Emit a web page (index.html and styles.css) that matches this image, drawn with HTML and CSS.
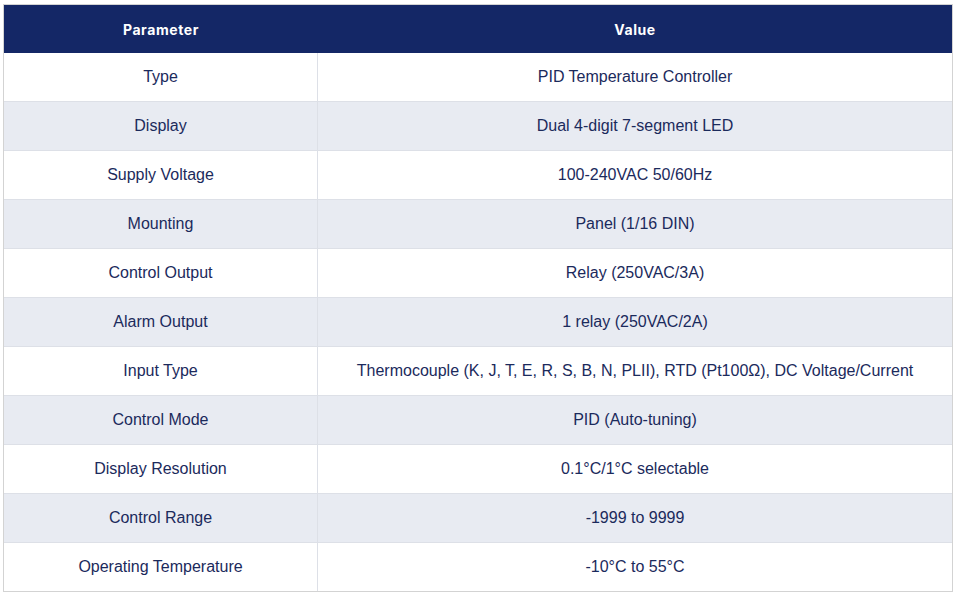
FILE: index.html
```html
<!DOCTYPE html>
<html>
<head>
<meta charset="utf-8">
<link rel="stylesheet" href="styles.css">
</head>
<body>
<table class="spec">
  <thead>
    <tr><th class="col-param">Parameter</th><th class="col-value">Value</th></tr>
  </thead>
  <tbody>
    <tr><td>Type</td><td>PID Temperature Controller</td></tr>
    <tr><td>Display</td><td>Dual 4-digit 7-segment LED</td></tr>
    <tr><td>Supply Voltage</td><td>100-240VAC 50/60Hz</td></tr>
    <tr><td>Mounting</td><td>Panel (1/16 DIN)</td></tr>
    <tr><td>Control Output</td><td>Relay (250VAC/3A)</td></tr>
    <tr><td>Alarm Output</td><td>1 relay (250VAC/2A)</td></tr>
    <tr><td>Input Type</td><td>Thermocouple (K, J, T, E, R, S, B, N, PLII), RTD (Pt100Ω), DC Voltage/Current</td></tr>
    <tr><td>Control Mode</td><td>PID (Auto-tuning)</td></tr>
    <tr><td>Display Resolution</td><td>0.1°C/1°C selectable</td></tr>
    <tr><td>Control Range</td><td>-1999 to 9999</td></tr>
    <tr><td>Operating Temperature</td><td>-10°C to 55°C</td></tr>
  </tbody>
</table>
</body>
</html>
```

FILE: styles.css
```css
html, body {
  margin: 0;
  padding: 0;
  background: #ffffff;
}
body {
  padding: 4px 0 0 3px;
  font-family: "Liberation Sans", Arial, sans-serif;
}
.spec {
  width: 950px;
  border-collapse: separate;
  border-spacing: 0;
  border: 1px solid #d3d3d3;
  table-layout: fixed;
}
.spec th {
  background: #142766;
  color: #ffffff;
  font-family: Inter, "Open Sans", sans-serif;
  font-weight: 700;
  font-size: 14px;
  letter-spacing: 0.6px;
  height: 48px;
  padding: 0;
  text-align: center;
}
.col-param { width: 314px; }
.spec td {
  height: 48px;
  padding: 0 8px;
  text-align: center;
  color: #1b2a5c;
  font-size: 16px;
  border-bottom: 1px solid #dde0e7;
}
.spec tbody tr:last-child td { border-bottom: none; }
.spec td:first-child { border-right: 1px solid #dde0e7; }
.spec tbody tr:nth-child(even) td { background: #e8ebf2; }
```
